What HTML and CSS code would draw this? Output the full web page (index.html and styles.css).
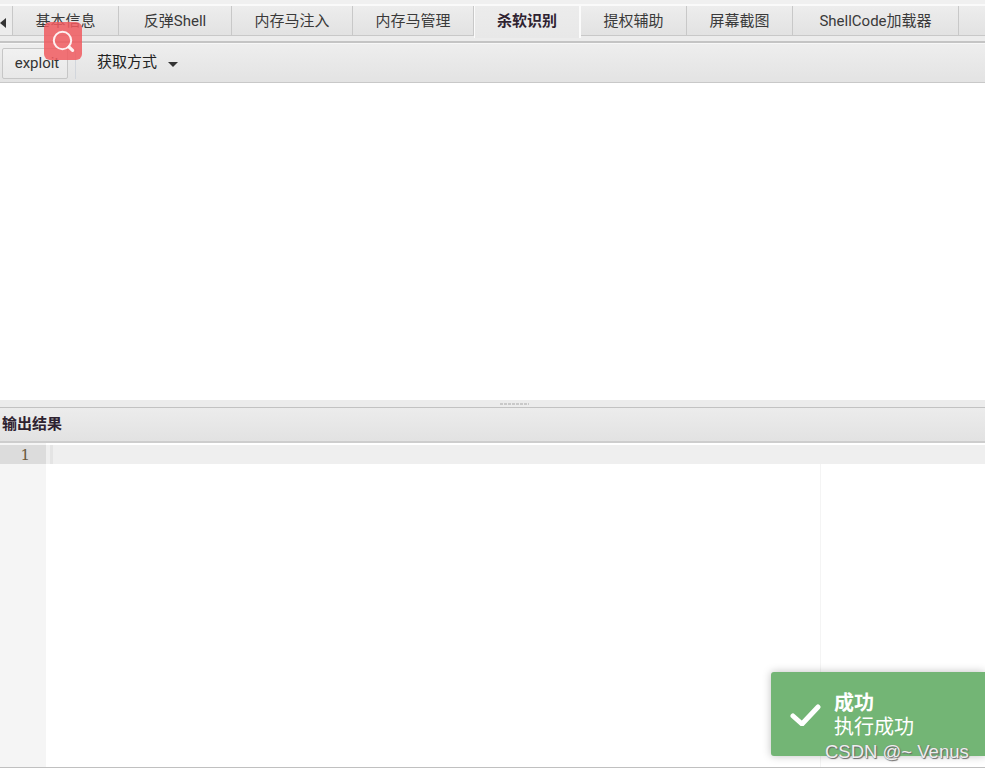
FILE: index.html
```html
<!DOCTYPE html>
<html lang="zh">
<head>
<meta charset="utf-8">
<title>杀软识别</title>
<link rel="stylesheet" href="styles.css">
</head>
<body>
<div class="app">
  <div class="tabbar">
    <div class="scroll"><svg class="scroll-icon" viewBox="0 0 6 10" width="6" height="10"><path d="M6 0v10L0 5z" fill="#333"/></svg></div>
    <div class="tab t1">基本信息</div>
    <div class="tab t2">反弹Shell</div>
    <div class="tab t3">内存马注入</div>
    <div class="tab t4">内存马管理</div>
    <div class="tab t5 active">杀软识别</div>
    <div class="tab t6">提权辅助</div>
    <div class="tab t7">屏幕截图</div>
    <div class="tab t8">ShellCode加载器</div>
    <div class="tab-rest"></div>
  </div>
  <div class="tab-gap"></div>
  <div class="toolbar">
    <button class="btn">exploit</button>
    <span class="sep"></span>
    <div class="menu">获取方式<span class="caret"></span></div>
  </div>
  <div class="canvas"></div>
  <div class="splitter"><span class="grip"></span></div>
  <div class="output-head">输出结果</div>
  <div class="editor">
    <div class="gutter"><div class="lineno">1</div></div>
    <div class="code">
      <div class="line"><span class="cursor"></span></div>
      <div class="margin"></div>
    </div>
  </div>
</div>
<div class="search-badge">
  <svg viewBox="0 0 38 38" width="38" height="38"><circle cx="18.5" cy="18.5" r="8.7" fill="none" stroke="#fff" stroke-opacity=".9" stroke-width="2"/><path d="M25 25l3.6 3.4" stroke="#fff" stroke-opacity=".9" stroke-width="3.2" stroke-linecap="round"/></svg>
</div>
<div class="toast">
  <svg class="check" viewBox="0 0 32 24" width="32" height="24"><path d="M4 14l9 8L29 5" fill="none" stroke="#fff" stroke-width="5" stroke-linecap="round" stroke-linejoin="round"/></svg>
  <div class="toast-text">
    <div class="toast-title">成功</div>
    <div class="toast-msg">执行成功</div>
  </div>
</div>
<div class="watermark">CSDN @~ Venus</div>
</body>
</html>
```
FILE: styles.css
```css
* { box-sizing: border-box; }
html, body { margin: 0; padding: 0; }
body {
  width: 985px;
  height: 769px;
  overflow: hidden;
  background: #fff;
  position: relative;
  font-family: Roboto, "Noto Sans CJK SC", sans-serif;
  color: #333;
}
.app { display: flex; flex-direction: column; height: 768px; padding-top: 4px; background: #f0f0f0; }
.tabbar {
  display: flex;
  height: 32px;
  flex: none;
  border-top: 2px solid #fafafa;
  border-bottom: 1px solid #c8c8c8;
  background: linear-gradient(#ededed, #e2e2e2);
}
.scroll { width: 13px; display: flex; align-items: center; padding: 4px 0 0; border-right: 1px solid #c8c8c8; background: #ececec; }
.tab {
  display: flex;
  align-items: center;
  justify-content: center;
  font-size: 15px;
  line-height: 1;
  padding-top: 1px;
  border-right: 1px solid #c8c8c8;
  color: #3a3a3a;
}
.t1 { width: 106px; }
.t2 { width: 113px; }
.t3 { width: 121px; }
.t4 { width: 121px; }
.t5 { width: 107px; }
.t6 { width: 106px; }
.t7 { width: 106px; }
.t8 { width: 166px; }
.tab-rest { flex: 1; }
.tab.active {
  height: 32px;
  font-weight: 700;
  color: #2e2230;
  background: linear-gradient(#ececec, #e8e8e8);
  border-left: 1px solid #fbfbfb;
  border-right: 2px solid #fbfbfb;
  position: relative;
  z-index: 1;
  padding-top: 0;
  padding-bottom: 2px;
}
.tab-gap { height: 5px; flex: none; background: #ececec; }
.toolbar {
  height: 42px;
  flex: none;
  display: flex;
  align-items: center;
  padding: 0 0 0 2px;
  border-top: 2px solid #c4c4c4;
  border-bottom: 1px solid #c8c8c8;
  background: linear-gradient(#eeeeee, #e3e3e3);
  box-shadow: inset 0 1px 0 #f7f7f7;
}
.btn {
  width: 66px;
  height: 31px;
  margin-top: 2px;
  border: 1px solid #c6c6c6;
  border-radius: 2px;
  background: linear-gradient(#f1f1f1, #e8e8e8);
  font: 15px Roboto, sans-serif;
  color: #333;
  padding: 0 0 2px 4px;
}
.sep { width: 1px; height: 30px; margin-top: 2px; margin-left: 7px; background: #d2d6dc; }
.menu { display: flex; align-items: center; margin-left: 21px; font-size: 15px; line-height: 1; color: #222; }
.caret { width: 0; height: 0; margin-left: 11px; margin-top: 3px; border: 5px solid transparent; border-top: 5px solid #333; border-bottom: 0; }
.canvas { height: 317px; flex: none; background: #fff; }
.splitter { height: 8px; flex: none; background: #ececec; border-bottom: 1px solid #c2c2c2; display: flex; justify-content: center; padding-top: 3px; }
.grip { width: 29px; height: 2px; margin-left: 43px; background: repeating-linear-gradient(90deg, #c9c9c9 0 3px, #ececec 3px 4px); }
.output-head {
  height: 35px;
  flex: none;
  display: flex;
  align-items: center;
  padding: 0 0 0 2px;
  border-bottom: 2px solid #cdcdcd;
  background: linear-gradient(#ececec, #e2e2e2);
  font-size: 15px;
  font-weight: 700;
  color: #2e2230;
  line-height: 1;
}
.editor { flex: 1; display: flex; background: #fff; border-bottom: 1px solid #c0c0c0; min-height: 0; }
.gutter { width: 46px; flex: none; background: #f5f5f5; padding-top: 2px; }
.lineno { height: 19px; background: #dcdcdc; text-align: right; padding-right: 16px; font: 15px/20px "DejaVu Serif", "Liberation Serif", serif; color: #6b5a3c; }
.code { flex: 1; position: relative; padding-top: 2px; }
.line { height: 19px; background: #efefef; padding-left: 4px; }
.cursor { display: block; width: 3px; height: 19px; background: #e4e4e4; }
.margin { position: absolute; left: 774px; top: 21px; bottom: 0; width: 1px; background: #f4f4f4; }
.search-badge {
  position: absolute;
  left: 44px;
  top: 22px;
  width: 38px;
  height: 38px;
  border-radius: 6px;
  background: rgba(240, 90, 95, .85);
}
.search-badge svg { display: block; }
.toast {
  position: absolute;
  left: 771px;
  top: 672px;
  width: 214px;
  height: 84px;
  display: flex;
  align-items: center;
  padding: 0 0 0 18px;
  background: #73b575;
  border-radius: 3px 0 0 3px;
  box-shadow: 0 0 8px rgba(0, 0, 0, .25);
  color: #fff;
}
.check { flex: none; }
.toast-text { margin-left: 13px; font-family: "Noto Sans CJK SC", sans-serif; font-size: 20px; line-height: 24px; }
.toast-title { font-weight: 700; }
.watermark {
  position: absolute;
  left: 825px;
  top: 741px;
  font: 18.5px/22px "Liberation Sans", sans-serif;
  color: #eeeeee;
  text-shadow: 1px 1px 1px #666, 0 0 1px #777;
  white-space: nowrap;
}
```
